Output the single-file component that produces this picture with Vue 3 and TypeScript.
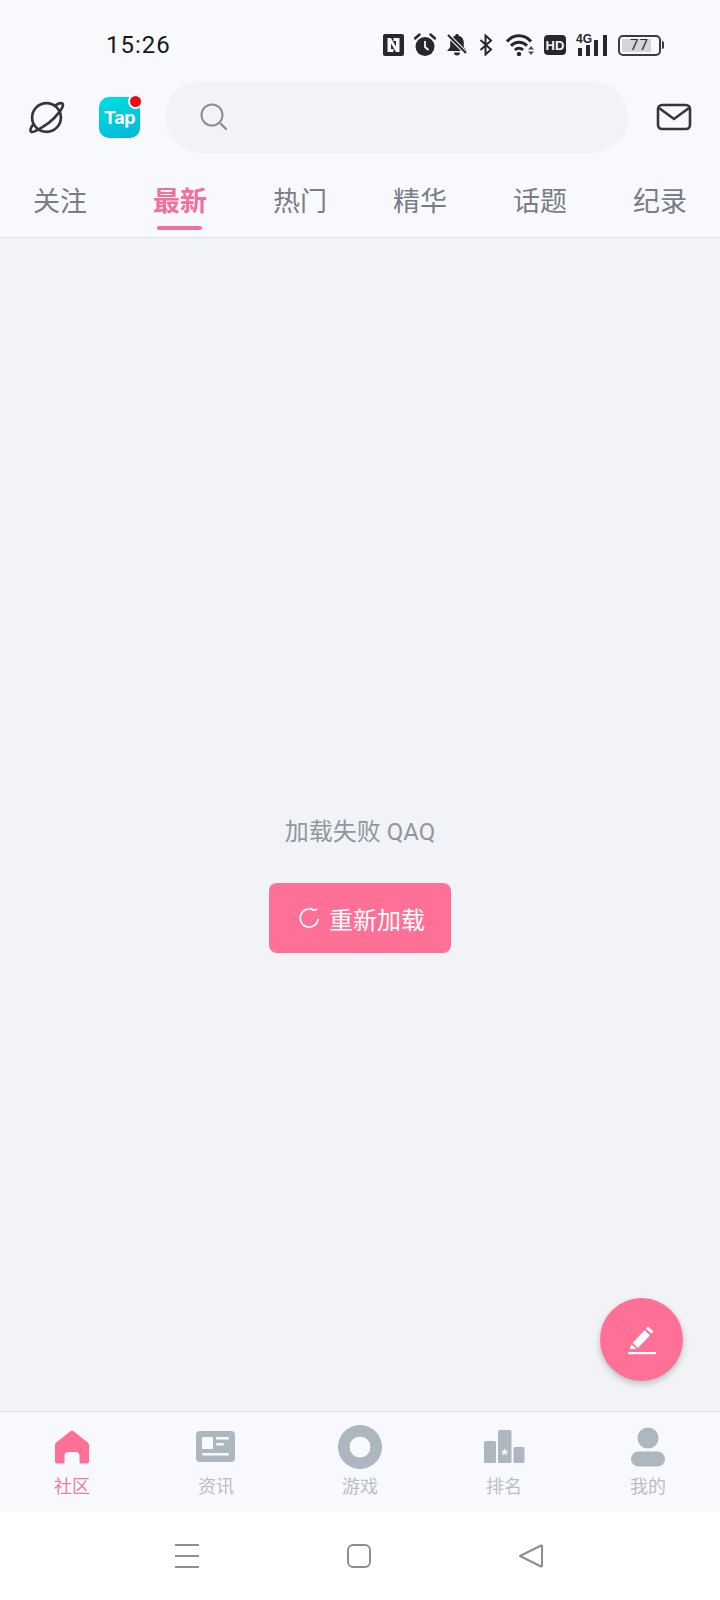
<script setup lang="ts">
const tabs: { label: string; active?: boolean }[] = [
  { label: '关注' },
  { label: '最新', active: true },
  { label: '热门' },
  { label: '精华' },
  { label: '话题' },
  { label: '纪录' },
]
const navItems: { label: string; key: string; active?: boolean }[] = [
  { label: '社区', key: 'home', active: true },
  { label: '资讯', key: 'news' },
  { label: '游戏', key: 'game' },
  { label: '排名', key: 'rank' },
  { label: '我的', key: 'me' },
]
</script>

<template>
  <div class="page">
    <div class="status">
      <span class="time">15:26</span>
      <div class="status-icons">
        <svg class="si-n" width="21" height="22" viewBox="0 0 21 22">
          <rect width="21" height="22" rx="2" fill="#26282c" />
          <path d="M4.500 18V4h3.500l5 8.500V7h-2.500V4h6v14h-3.500L8 9.500V15h2.500v3z" fill="#f8f9fd" />
        </svg>
        <svg class="si-a" width="22" height="24" viewBox="0 0 22 24">
          <circle cx="11" cy="13.500" r="9.500" fill="#26282c" />
          <path d="M11 8v6l3.500 3" fill="none" stroke="#f8f9fd" stroke-width="1.800" />
          <path d="M1 5.500 5.500 1.500M21 5.500 16.500 1.500" stroke="#26282c" stroke-width="2.400" stroke-linecap="round" />
        </svg>
        <svg class="si-b" width="22" height="24" viewBox="0 0 22 24">
          <path d="M11 1c1.100 0 1.800.7 1.800 1.700 3.400.9 5 3.500 5 6.800v4.500l3 4H1.200l3-4V9.500c0-3.300 1.600-5.900 5-6.800C9.200 1.700 9.900 1 11 1z" fill="#26282c" />
          <path d="M8 19.500h6a3 3 0 0 1-6 0z" fill="#26282c" />
          <path d="M2 2l19 19" stroke="#f8f9fd" stroke-width="4" />
          <path d="M2 2l18 18" stroke="#26282c" stroke-width="2" />
        </svg>
        <svg class="si-bt" width="14" height="22" viewBox="0 0 14 22">
          <path d="M1.500 6 12 15.500 6.500 20.500V1.500L12 6.500 1.500 16" fill="none" stroke="#26282c" stroke-width="2" />
        </svg>
        <svg class="si-w" width="29" height="22" viewBox="0 0 29 22">
          <path d="M1 7.500C4.500 3.500 9 1.800 13 1.800s8.500 1.700 12 5.700M5 11.800c2.200-2.300 5-3.600 8-3.600s5.800 1.300 8 3.600M9 16c1.100-1.100 2.500-1.800 4-1.800s2.900.7 4 1.800" fill="none" stroke="#26282c" stroke-width="3" />
          <circle cx="13" cy="20" r="2.200" fill="#26282c" />
          <path d="M22 15.500 25 12 28 15.500zM22 17.500 25 21 28 17.500z" fill="#4a4d52" />
        </svg>
        <svg class="si-hd" width="22" height="20" viewBox="0 0 22 20">
          <rect width="22" height="20" rx="4" fill="#26282c" />
          <text x="11" y="15" text-anchor="middle" class="hd-text">HD</text>
        </svg>
        <svg class="si-s" width="32" height="24" viewBox="0 0 32 24">
          <text x="0" y="10" class="g-text">4G</text>
          <rect x="2" y="15" width="4" height="8" fill="#26282c" />
          <rect x="10" y="12" width="4" height="11" fill="#26282c" />
          <rect x="18" y="7" width="4" height="16" fill="#26282c" />
          <rect x="27" y="2" width="4" height="21" fill="#26282c" />
        </svg>
        <div class="battery">
          <div class="battery-body">
            <div class="battery-fill"></div>
            <span class="battery-text">77</span>
          </div>
          <div class="battery-nub"></div>
        </div>
      </div>
    </div>

    <div class="header">
      <svg class="planet" width="37" height="37" viewBox="0 0 36 36">
        <circle cx="18" cy="18" r="14" fill="none" stroke="#33363b" stroke-width="2.600" />
        <path d="M27 6C31 3.500 34 3.500 34 5.500 34 9 28 17 20.500 23 12 29 5 33 3 32 1.500 31 2.500 28 5 25" fill="none" stroke="#33363b" stroke-width="2.600" stroke-linecap="round" />
      </svg>
      <div class="tap">
        <span class="tap-text">Tap</span>
        <span class="tap-dot"></span>
      </div>
      <div class="search">
        <svg width="30" height="30" viewBox="0 0 30 30">
          <circle cx="13" cy="13" r="10.500" fill="none" stroke="#8a8e94" stroke-width="2" />
          <path d="M22 22l5 5" stroke="#8a8e94" stroke-width="2.400" stroke-linecap="round" />
        </svg>
      </div>
      <svg class="mail" width="36" height="28" viewBox="0 0 36 28">
        <rect x="2" y="2" width="32" height="24" rx="4" fill="none" stroke="#33363b" stroke-width="2.600" />
        <path d="M3 5l15 11L33 5" fill="none" stroke="#33363b" stroke-width="2.600" />
      </svg>
    </div>

    <div class="tabs">
      <div v-for="t in tabs" :key="t.label" class="tab" :class="{ active: t.active }">
        <span>{{ t.label }}</span>
        <i v-if="t.active" class="tab-line"></i>
      </div>
    </div>

    <div class="content">
      <div class="error-text">加载失败 QAQ</div>
      <button class="reload">
        <svg width="22" height="22" viewBox="0 0 22 22">
          <path d="M15.500 3.200A9 9 0 1 0 20 12.500" fill="none" stroke="#fff" stroke-width="1.600" stroke-linecap="round" />
          <path d="M13.500 1.500 15.700 3.200 18.500 2.500" fill="none" stroke="#fff" stroke-width="1.400" stroke-linecap="round" stroke-linejoin="round" />
        </svg>
        <span>重新加载</span>
      </button>
      <div class="fab">
        <svg width="30" height="32" viewBox="0 0 30 32">
          <path d="M21 2.500l5.500 5-2 2.200-5.500-5zM17.500 6.200l5.500 5L11 24l-5.500-5z" fill="#fff" />
          <path d="M4.500 20.500l5 4.500H2.500z" fill="#fff" />
          <rect x="1" y="28" width="28" height="2.200" fill="#fff" />
        </svg>
      </div>
    </div>

    <div class="nav">
      <div v-for="n in navItems" :key="n.key" class="nav-item" :class="{ active: n.active }">
        <div class="nav-icon">
          <svg v-if="n.key === 'home'" width="36" height="34" viewBox="0 0 36 34">
            <path d="M16.500 1.200a2.400 2.400 0 0 1 3 0L33.800 12.500a3 3 0 0 1 1.200 2.400V31.500a2 2 0 0 1-2 2H27a1.500 1.500 0 0 1-1.500-1.500v-6a4 4 0 0 0-4-4h-7a4 4 0 0 0-4 4v6A1.500 1.500 0 0 1 9 33.500H3a2 2 0 0 1-2-2V14.900a3 3 0 0 1 1.200-2.400z" fill="#ff7096" />
          </svg>
          <svg v-else-if="n.key === 'news'" width="40" height="32" viewBox="0 0 40 32">
            <rect width="39" height="31" rx="4" fill="#acb7bf" />
            <rect x="6" y="6" width="11" height="12" rx="1" fill="#f8f9fd" />
            <rect x="20" y="6" width="13" height="2.500" rx="1" fill="#f8f9fd" />
            <rect x="20" y="12" width="8" height="2.500" rx="1" fill="#f8f9fd" />
            <rect x="6" y="22" width="27" height="2.500" rx="1" fill="#f8f9fd" />
          </svg>
          <svg v-else-if="n.key === 'game'" width="44" height="44" viewBox="0 0 44 44">
            <circle cx="22" cy="22" r="22" fill="#acb7bf" />
            <circle cx="22" cy="22" r="10.500" fill="#f8f9fd" />
          </svg>
          <svg v-else-if="n.key === 'rank'" width="41" height="34" viewBox="0 0 41 34">
            <rect x="0" y="11" width="12" height="22" rx="1.500" fill="#acb7bf" />
            <rect x="14" y="0" width="13.500" height="33" rx="1.500" fill="#acb7bf" />
            <rect x="29.500" y="17" width="11" height="16" rx="1.500" fill="#acb7bf" />
            <path d="M20.700 18.500l1.100 2.300 2.500.3-1.800 1.700.5 2.500-2.300-1.200-2.300 1.200.5-2.500-1.800-1.700 2.500-.3z" fill="#f8f9fd" />
          </svg>
          <svg v-else width="36" height="40" viewBox="0 0 36 40">
            <circle cx="18" cy="11" r="10.500" fill="#acb7bf" />
            <rect x="1" y="24.500" width="34" height="15" rx="7.500" fill="#acb7bf" />
          </svg>
        </div>
        <span class="nav-label">{{ n.label }}</span>
      </div>
    </div>

    <div class="sysbar">
      <svg width="26" height="26" viewBox="0 0 26 26">
        <path d="M1 2h24M1 13h24M1 24h24" stroke="#8f8f8f" stroke-width="2" />
      </svg>
      <svg width="26" height="26" viewBox="0 0 26 26">
        <rect x="2" y="2" width="22" height="22" rx="5" fill="none" stroke="#8f8f8f" stroke-width="2" />
      </svg>
      <svg width="26" height="26" viewBox="0 0 26 26">
        <path d="M2 13 23 2.500a.8.800 0 0 1 1 .7v19.600a.8.800 0 0 1-1 .7z" fill="none" stroke="#8f8f8f" stroke-width="2" stroke-linejoin="round" />
      </svg>
    </div>
  </div>
</template>

<style scoped>
.page {
  width: 720px;
  height: 1600px;
  display: flex;
  flex-direction: column;
  overflow: hidden;
  background: #f8f9fd;
  font-family: Roboto, "Noto Sans CJK SC", sans-serif;
}
.status {
  height: 72px;
  flex: none;
  display: flex;
  align-items: center;
  justify-content: space-between;
  padding: 18px 56px 0 106px;
  box-sizing: border-box;
  color: #16181c;
}
.time {
  font-size: 24px;
  font-weight: 400;
  letter-spacing: 1px;
}
.status-icons {
  display: flex;
  align-items: center;
}
.si-a { margin-left: 10px; }
.si-b { margin-left: 10px; }
.si-bt { margin-left: 11px; }
.si-w { margin-left: 13px; }
.si-hd { margin-left: 9px; }
.si-s { margin-left: 10px; }
.hd-text {
  font: 700 13px "Liberation Sans", sans-serif;
  fill: #f8f9fd;
}
.g-text {
  font: 700 12px "Liberation Sans", sans-serif;
  fill: #26282c;
}
.battery {
  display: flex;
  align-items: center;
  margin-left: 10px;
}
.battery-body {
  position: relative;
  width: 43px;
  height: 21px;
  box-sizing: border-box;
  border: 2px solid #3a3c40;
  border-radius: 5px;
  padding: 2px;
  overflow: hidden;
}
.battery-fill {
  width: 29px;
  height: 100%;
  background: #d4d5d8;
}
.battery-text {
  position: absolute;
  left: 10px;
  top: -1px;
  line-height: 19px;
  font-size: 15px;
  color: #2b2d31;
  letter-spacing: 1px;
}
.battery-nub {
  width: 2px;
  height: 8px;
  margin-left: 1px;
  background: #3a3c40;
  border-radius: 0 2px 2px 0;
}
.header {
  height: 90px;
  flex: none;
  display: flex;
  align-items: center;
  padding-left: 28px;
  box-sizing: border-box;
}
.planet {
  flex: none;
}
.tap {
  position: relative;
  flex: none;
  width: 41px;
  height: 41px;
  margin-left: 34px;
  border-radius: 10px;
  background: linear-gradient(160deg, #00dfe2, #00b7d6);
  display: flex;
  align-items: center;
  justify-content: center;
}
.tap-text {
  color: #fff;
  font: 700 18px Inter, sans-serif;
  letter-spacing: -0.5px;
}
.tap-dot {
  position: absolute;
  right: -3px;
  top: -3px;
  width: 11px;
  height: 11px;
  border-radius: 50%;
  background: #ee0a14;
  border: 2px solid #f8f9fd;
}
.search {
  flex: none;
  width: 463px;
  height: 72px;
  margin-left: 25px;
  border-radius: 36px;
  background: #f2f3f7;
  display: flex;
  align-items: center;
  padding-left: 34px;
  box-sizing: border-box;
}
.mail {
  flex: none;
  margin-left: 28px;
}
.tabs {
  height: 76px;
  flex: none;
  display: grid;
  grid-template-columns: repeat(6, 120px);
  border-bottom: 1px solid #e2e4e8;
  box-sizing: border-box;
}
.tab {
  position: relative;
  display: flex;
  justify-content: center;
  padding-top: 22px;
  font-size: 27px;
  line-height: 36px;
  color: #787d87;
}
.tab.active {
  color: #f2709c;
  font-weight: 700;
}
.tab-line {
  position: absolute;
  left: 37px;
  width: 45px;
  bottom: 7px;
  height: 4px;
  border-radius: 2px;
  background: #f2709c;
}
.content {
  position: relative;
  flex: 1;
  min-height: 0;
  background: #f1f3f7;
  display: flex;
  flex-direction: column;
  align-items: center;
  padding-top: 577px;
  box-sizing: border-box;
}
.error-text {
  font-size: 24px;
  line-height: 34px;
  color: #90979e;
}
.reload {
  margin-top: 34px;
  width: 182px;
  height: 70px;
  border: 0;
  border-radius: 8px;
  background: #ff7096;
  color: #fff;
  display: flex;
  align-items: center;
  gap: 9px;
  padding: 0 0 0 29px;
  font-family: inherit;
  font-size: 24px;
  box-sizing: border-box;
}
.fab {
  position: absolute;
  left: 600px;
  top: 1060px;
  width: 83px;
  height: 83px;
  border-radius: 50%;
  background: #ff7096;
  box-shadow: 0 3px 6px rgba(0, 0, 0, 0.22);
  display: flex;
  align-items: center;
  justify-content: center;
}
.nav {
  height: 101px;
  flex: none;
  display: grid;
  grid-template-columns: repeat(5, 144px);
  border-top: 1px solid #dfe1e5;
  box-sizing: border-box;
  background: #f8f9fd;
}
.nav-item {
  display: flex;
  flex-direction: column;
  align-items: center;
  padding-top: 11px;
}
.nav-icon {
  height: 48px;
  display: flex;
  align-items: center;
  justify-content: center;
}
.nav-label {
  margin-top: 3px;
  font-size: 18px;
  line-height: 26px;
  color: #b9bfc5;
}
.nav-item.active .nav-label {
  color: #ee7ea4;
}
.sysbar {
  height: 88px;
  flex: none;
  background: #fff;
  display: flex;
  align-items: center;
  justify-content: center;
  gap: 146px;
  padding-right: 2px;
}
</style>
